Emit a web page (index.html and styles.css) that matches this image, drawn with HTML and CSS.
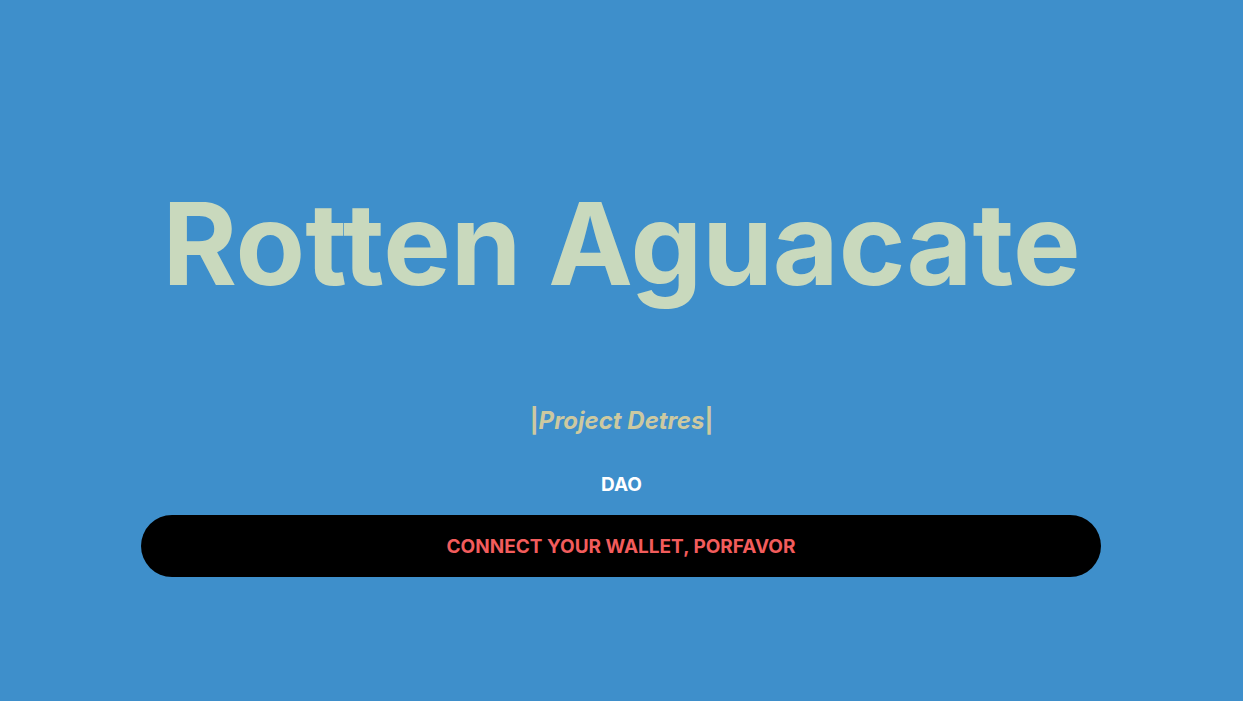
FILE: index.html
```html
<!DOCTYPE html>
<html lang="en">
<head>
<meta charset="utf-8">
<title>Rotten Aguacate</title>
<link rel="stylesheet" href="styles.css">
</head>
<body>
<main class="page">
  <h1 class="title">Rotten Aguacate</h1>
  <p class="subtitle"><span class="pipe">|</span><em class="project">Project Detres</em><span class="pipe">|</span></p>
  <p class="dao">DAO</p>
  <button class="connect">CONNECT YOUR WALLET, PORFAVOR</button>
</main>
</body>
</html>
```
FILE: styles.css
```css
html, body {
  margin: 0;
  padding: 0;
  height: 100%;
}
body {
  background: #3e8fcb;
  font-family: Inter, "Noto Sans", sans-serif;
}
.page {
  display: flex;
  flex-direction: column;
  align-items: center;
  padding-top: 179px;
}
.title {
  margin: 0;
  font-size: 113.5px;
  font-weight: 700;
  line-height: 130px;
  color: #c9d9bd;
}
.subtitle {
  margin: 97px 0 0;
  font-size: 24px;
  font-weight: 700;
  line-height: 30px;
  color: #cdc9a0;
}
.project {
  font-style: italic;
}
.pipe {
  font-style: normal;
}
.dao {
  margin: 38px 0 0;
  font-size: 19px;
  font-weight: 700;
  line-height: 22px;
  color: #ffffff;
}
.connect {
  margin-top: 19px;
  margin-right: 1px;
  width: 960px;
  height: 62px;
  border: 0;
  border-radius: 31px;
  background: #000;
  color: #f25c5c;
  font-family: inherit;
  font-size: 19px;
  font-weight: 700;
}
```
